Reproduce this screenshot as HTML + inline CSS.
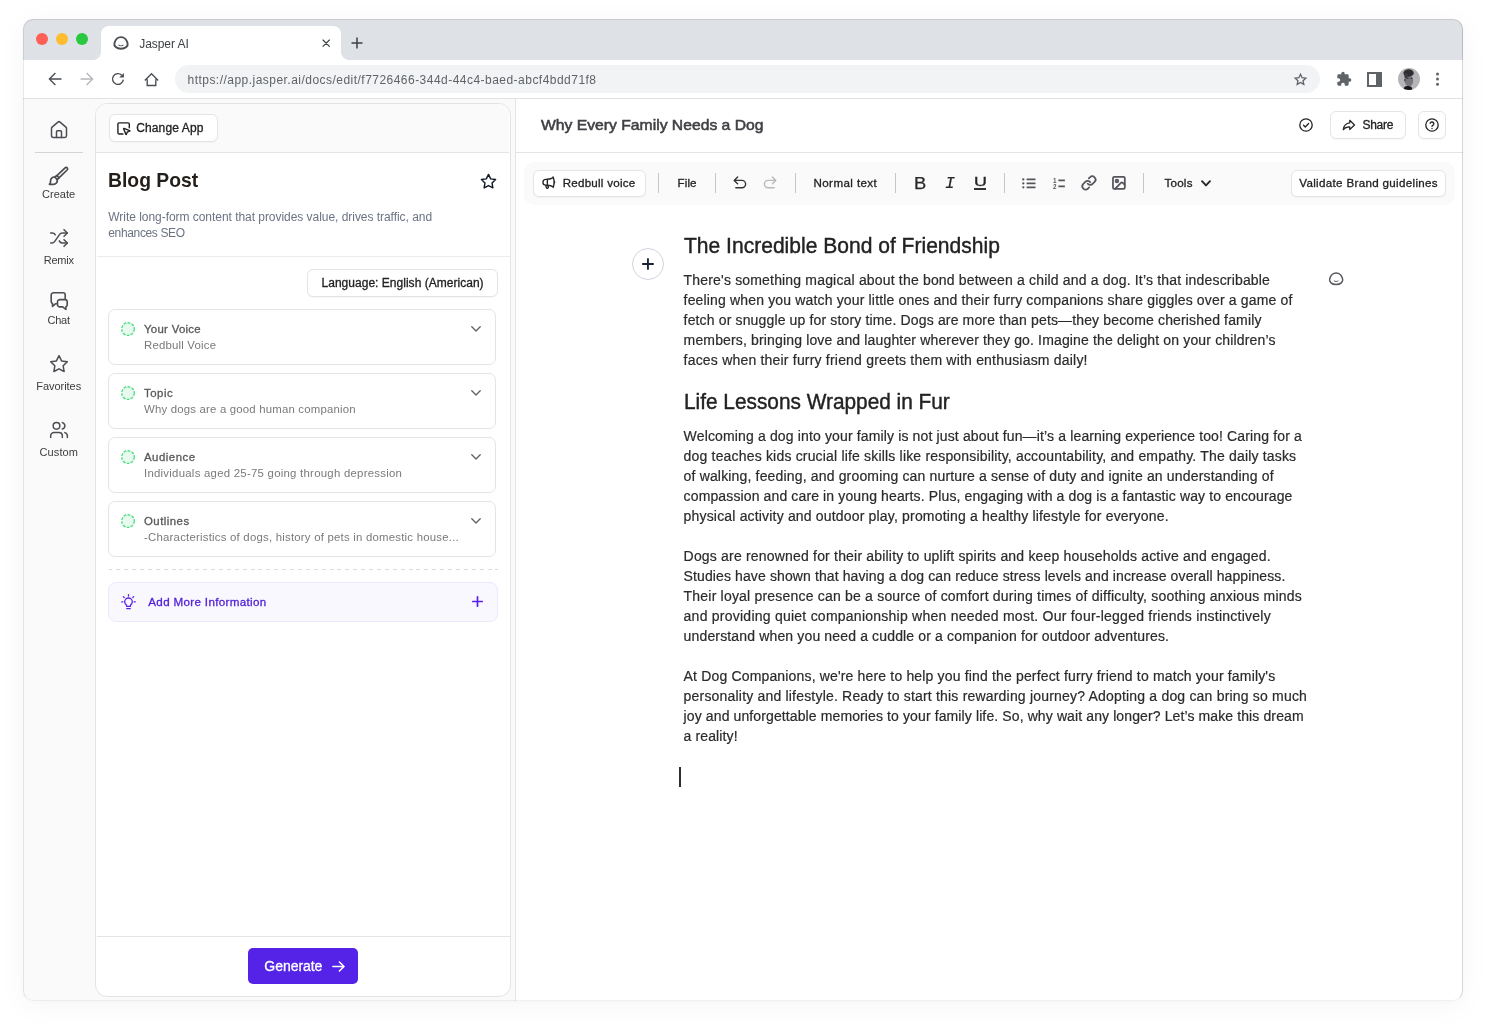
<!DOCTYPE html>
<html lang="en">
<head>
<meta charset="utf-8">
<title>Jasper AI</title>
<style>
*{box-sizing:border-box;margin:0;padding:0}
html,body{width:1486px;height:1028px;overflow:hidden;background:#fff}
body{font-family:"Liberation Sans",sans-serif;color:#222;position:relative}
svg{display:block;overflow:visible;position:absolute}
.a{position:absolute}
.t{position:absolute;white-space:nowrap}
.ic{fill:none;stroke-linecap:round;stroke-linejoin:round}
#win{position:absolute;left:23px;top:19px;width:1440px;height:982px;border-radius:10px;background:#fff;overflow:hidden;
 box-shadow:0 5px 30px rgba(0,0,0,.038),0 1px 5px rgba(0,0,0,.015)}
#ring{position:absolute;left:23px;top:19px;width:1440px;height:982px;border-radius:10px;border:1px solid rgba(0,0,0,.085);border-top-color:rgba(0,0,0,.10);border-right-color:rgba(0,0,0,.16);border-bottom-color:rgba(0,0,0,.055);pointer-events:none}
#o{position:absolute;left:-23px;top:-19px;width:1486px;height:1028px;will-change:transform}
/* chrome */
#tabbar{left:23px;top:19px;width:1440px;height:41px;background:#dee1e6}
.tl{position:absolute;top:33px;width:12px;height:12px;border-radius:50%}
#tab{left:101px;top:26px;width:240px;height:34px;background:#fff;border-radius:8px 8px 0 0}
#tab:before,#tab:after{content:"";position:absolute;bottom:0;width:8px;height:8px}
#tab:before{left:-8px;background:radial-gradient(circle at 0 0,rgba(255,255,255,0) 7.6px,#fff 8.2px)}
#tab:after{right:-8px;background:radial-gradient(circle at 100% 0,rgba(255,255,255,0) 7.6px,#fff 8.2px)}
#ctool{left:23px;top:60px;width:1440px;height:39px;background:#fff;border-bottom:1px solid #e2e2e2}
#url{left:175px;top:65px;width:1145px;height:28px;border-radius:14px;background:#f1f3f4}
/* app */
#appbg{left:23px;top:99px;width:1440px;height:902px;background:#fafafa}
#panel{left:95px;top:103px;width:415.5px;height:894px;background:#fff;border:1px solid #e4e4e7;border-radius:12px;overflow:hidden}
#phead{left:0;top:0;width:413px;height:49px;background:#fafafa;border-bottom:1px solid #e4e4e7}
.hr{position:absolute;height:1px;background:#ececee}
.btn{position:absolute;background:#fff;border:1px solid #e4e4e7;border-radius:6px;box-shadow:0 1px 1px rgba(0,0,0,.03)}
.card{position:absolute;left:108px;width:388px;height:56px;border:1px solid #e2e4ea;border-radius:7px;background:#fff}
.dot{position:absolute;left:121px;width:14px;height:14px}
#editor{left:515px;top:99px;width:948px;height:902px;background:#fff;border-left:1px solid #e4e4e7}
#etool{left:524px;top:161.5px;width:930.5px;height:43px;background:#fafafa;border-radius:10px}
.sep{position:absolute;top:173.200px;width:1px;height:19.400px;background:#c6c6ca}
</style>
</head>
<body>
<div id="win"><div id="o">
<!-- ======= browser chrome ======= -->
<div id="tabbar" class="a"></div>
<div class="tl" style="left:36px;background:#fe5f57"></div>
<div class="tl" style="left:56px;background:#febc2e"></div>
<div class="tl" style="left:76px;background:#28c840"></div>
<div id="tab" class="a"></div>
<div id="ctool" class="a"></div>
<div id="url" class="a"></div>

<!-- tab favicon (jasper face) -->
<svg style="left:113px;top:36px" width="16" height="14" viewBox="0 0 16 14"><path class="ic" stroke="#4a4d51" stroke-width="1.900" d="M8 1.100C4.700 1.100 2.400 3.600 1.400 7.200.700 10 3.500 12.700 8 12.700s7.300-2.700 6.600-5.500C13.600 3.600 11.300 1.100 8 1.100z"/><path class="ic" stroke="#4a4d51" stroke-width="1.100" d="M5.900 9.100c1 .900 3.200.900 4.200 0"/></svg>
<!-- tab close -->
<svg style="left:321.700px;top:38.900px" width="8.400" height="8.400" viewBox="0 0 10 10"><path class="ic" stroke="#3c4043" stroke-width="1.4" d="M1.200 1.200l7.600 7.600M8.800 1.200l-7.600 7.600"/></svg>
<!-- new tab plus -->
<svg style="left:351px;top:37px" width="12" height="12" viewBox="0 0 12 12"><path class="ic" stroke="#3c4043" stroke-width="1.5" style="stroke-linecap:butt" d="M6 .5v11M.5 6h11"/></svg>
<!-- back -->
<svg style="left:48px;top:72px" width="14" height="14" viewBox="0 0 14 14"><path class="ic" stroke="#4a4d51" stroke-width="1.350" style="stroke-linecap:butt;stroke-linejoin:miter" d="M13.500 7H1.800M7.400 1L1.400 7l6 6"/></svg>
<!-- forward -->
<svg style="left:80px;top:72px" width="14" height="14" viewBox="0 0 14 14"><path class="ic" stroke="#b4b7bb" stroke-width="1.350" style="stroke-linecap:butt;stroke-linejoin:miter" d="M.5 7h11.700M6.600 1l6 6-6 6"/></svg>
<!-- reload -->
<svg style="left:111px;top:72px" width="14" height="14" viewBox="0 0 14 14"><path class="ic" stroke="#4a4d51" stroke-width="1.350" style="stroke-linecap:butt" d="M12.300 7.600A5.400 5.400 0 1 1 10.800 3.200"/><path fill="#4a4d51" d="M12.900.9v4.700H8.200z"/></svg>
<!-- home -->
<svg style="left:143.500px;top:71.500px" width="15" height="15" viewBox="0 0 15 15"><path class="ic" stroke="#4a4d51" stroke-width="1.350" style="stroke-linecap:butt;stroke-linejoin:miter" d="M3.200 7.200v6.300h8.600V7.200M.8 8.400L7.500 1.700l6.700 6.700"/></svg>
<!-- bookmark star -->
<svg style="left:1293.500px;top:72.500px" width="13" height="12.500" viewBox="0 0 24 23"><path class="ic" stroke="#5f6368" stroke-width="2.400" style="stroke-linejoin:miter" d="M12 2.400l2.900 6.300 6.900.8-5.100 4.700 1.400 6.800L12 17.500 5.900 21l1.400-6.800L2.200 9.500l6.900-.8z"/></svg>
<!-- puzzle -->
<svg style="left:1335.500px;top:71px" width="16" height="16" viewBox="0 0 24 24"><path fill="#5f6368" d="M20.500 11H19V7c0-1.100-.9-2-2-2h-4V3.500a2.500 2.500 0 0 0-5 0V5H4c-1.100 0-2 .9-2 2v3.800h1.500c1.500 0 2.700 1.200 2.700 2.700S5 16.200 3.500 16.200H2V20c0 1.100.9 2 2 2h3.800v-1.500c0-1.500 1.200-2.700 2.700-2.700s2.700 1.200 2.700 2.700V22H17c1.100 0 2-.9 2-2v-4h1.500a2.500 2.500 0 0 0 0-5z"/></svg>
<!-- side panel -->
<svg style="left:1367px;top:71.500px" width="15" height="15" viewBox="0 0 15 15"><rect x="1" y="1" width="13" height="13" fill="none" stroke="#5f6368" stroke-width="2"/><rect x="9" y="1" width="5" height="13" fill="#5f6368"/></svg>
<!-- avatar -->
<svg style="left:1398px;top:68px" width="22" height="22" viewBox="0 0 22 22"><defs><clipPath id="avc"><circle cx="11" cy="11" r="11"/></clipPath><filter id="avb" x="-20%" y="-20%" width="140%" height="140%"><feGaussianBlur stdDeviation=".550"/></filter></defs>
<g clip-path="url(#avc)"><rect width="22" height="22" fill="#b6b4b6"/><g filter="url(#avb)">
<ellipse cx="10.900" cy="12.700" rx="4.200" ry="5.900" fill="#77777e"/>
<ellipse cx="7" cy="12" rx="1.100" ry="1.600" fill="#5a5a61"/>
<ellipse cx="10.600" cy="5" rx="5.200" ry="3.700" fill="#2f2f36"/>
<ellipse cx="8" cy="7.800" rx="1.800" ry="2.600" fill="#3b3b42"/>
<ellipse cx="9.600" cy="10.400" rx="1.300" ry=".600" fill="#3d3d44"/><ellipse cx="13.500" cy="10.400" rx="1.100" ry=".600" fill="#3d3d44"/>
<ellipse cx="9.900" cy="21.300" rx="4.300" ry="3.400" fill="#15151a"/>
</g></g></svg>
<!-- menu dots -->
<svg style="left:1435px;top:71px" width="5" height="16" viewBox="0 0 5 16"><circle cx="2.500" cy="3" r="1.500" fill="#5f6368"/><circle cx="2.500" cy="8" r="1.500" fill="#5f6368"/><circle cx="2.500" cy="13.200" r="1.500" fill="#5f6368"/></svg>

<!-- ======= app ======= -->
<div id="appbg" class="a"></div>

<!-- nav -->
<svg style="left:49px;top:119.5px" width="20" height="20" viewBox="0 0 24 24"><g class="ic" stroke="#4d4d53" stroke-width="1.8"><path d="M15 21v-7a1 1 0 0 0-1-1h-4a1 1 0 0 0-1 1v7"/><path d="M3 10a2 2 0 0 1 .709-1.528l7-5.999a2 2 0 0 1 2.582 0l7 5.999A2 2 0 0 1 21 10v9a2 2 0 0 1-2 2H5a2 2 0 0 1-2-2z"/></g></svg><div class="a" style="left:35px;top:152px;width:48px;height:1px;background:#d4d4d8"></div><svg style="left:49px;top:165.500px" width="20" height="20" viewBox="0 0 20 20"><g class="ic" stroke="#4b4b50" stroke-width="1.700"><path d="M9.980 11.790 18.120 4A1.500 1.500 0 0 0 16.080 1.800L7.940 9.590"/><path d="M7.940 9.590l2.040 2.200M5.730 10.980l2.520 2.700M7.940 9.590 5.730 10.980M9.980 11.790 8.250 13.680"/><path d="M5.730 10.980C3.200 10.900 1.500 12.600 1.600 14.800c.050 1.600-.400 2.800-1.200 3.500h4c2.400 0 4.300-1.900 3.850-4.620"/></g></svg><svg style="left:49px;top:228px" width="20" height="20" viewBox="0 0 24 24"><g class="ic" stroke="#4d4d53" stroke-width="1.8"><path d="M2 18h1.400c1.300 0 2.500-.600 3.300-1.700l6.100-8.600c.700-1.100 2-1.700 3.300-1.700H22"/><path d="m18 2 4 4-4 4"/><path d="M2 6h1.900c1.500 0 2.900.900 3.600 2.200"/><path d="M22 18h-5.900c-1.300 0-2.600-.700-3.300-1.800l-.500-.800"/><path d="m18 14 4 4-4 4"/></g></svg><svg style="left:49px;top:290.500px" width="20" height="20" viewBox="0 0 20 20"><g class="ic" stroke="#4d4d53" stroke-width="1.600"><path d="M9 12.700H6.700L3.500 15.300V12.500A2.200 2.200 0 0 1 2.200 10.500V4A2.200 2.200 0 0 1 4.400 1.800H14A2.200 2.200 0 0 1 16.200 4V7.800"/><path fill="#fafafa" d="M10.700 8.600H16A2.200 2.200 0 0 1 18.200 10.800V13.700A2.200 2.200 0 0 1 16.900 15.700V18.500L13.700 15.900H10.700A2.200 2.200 0 0 1 8.500 13.700V10.800A2.200 2.200 0 0 1 10.700 8.600z"/></g></svg><svg style="left:49px;top:353.5px" width="20" height="20" viewBox="0 0 24 24"><g class="ic" stroke="#4d4d53" stroke-width="1.8"><polygon points="12 2 15.090 8.260 22 9.270 17 14.140 18.180 21.020 12 17.770 5.820 21.020 7 14.140 2 9.270 8.910 8.260 12 2"/></g></svg><svg style="left:49px;top:420px" width="20" height="20" viewBox="0 0 24 24"><g class="ic" stroke="#4d4d53" stroke-width="1.8"><path d="M16 21v-2a4 4 0 0 0-4-4H6a4 4 0 0 0-4 4v2"/><circle cx="9" cy="7" r="4"/><path d="M22 21v-2a4 4 0 0 0-3-3.870"/><path d="M16 3.130a4 4 0 0 1 0 7.750"/></g></svg>
<div id="panel" class="a"><div id="phead" class="a"></div></div>

<!-- panel widgets -->
<div class="btn" style="left:108.500px;top:114px;width:109px;height:28px"></div><svg style="left:115.900px;top:121.400px" width="15.200" height="14.800" viewBox="0 0 24 24" preserveAspectRatio="none"><g class="ic" stroke="#222" stroke-width="2.2"><path d="M12.034 12.681a.498.498 0 0 1 .647-.647l9 3.500a.5.500 0 0 1-.033.943l-3.444 1.068a1 1 0 0 0-.660.660l-1.067 3.443a.5.500 0 0 1-.943.033z"/><path d="M21 11V5a2 2 0 0 0-2-2H5a2 2 0 0 0-2 2v14a2 2 0 0 0 2 2h6"/></g></svg><svg style="left:479.5px;top:172.5px" width="17" height="17" viewBox="0 0 24 24"><g class="ic" stroke="#111827" stroke-width="2.0"><polygon points="12 2 15.090 8.260 22 9.270 17 14.140 18.180 21.020 12 17.770 5.820 21.020 7 14.140 2 9.270 8.910 8.260 12 2"/></g></svg><div class="hr" style="left:96.500px;top:256px;width:413px"></div><div class="btn" style="left:307px;top:269px;width:190.500px;height:27.500px"></div><div class="card" style="top:309px"></div><svg style="left:121px;top:322px" width="14" height="14" viewBox="0 0 14 14"><circle cx="7" cy="7" r="6.300" fill="#e9f9ef" stroke="#4ade80" stroke-width="1.350" stroke-dasharray="2.850 1.220"/></svg><svg style="left:471px;top:326.2px" width="10" height="6" viewBox="0 0 10 6"><path class="ic" stroke="#62626b" stroke-width="1.350" d="M.8.800 5 5l4.200-4.200"/></svg><div class="card" style="top:373px"></div><svg style="left:121px;top:386px" width="14" height="14" viewBox="0 0 14 14"><circle cx="7" cy="7" r="6.300" fill="#e9f9ef" stroke="#4ade80" stroke-width="1.350" stroke-dasharray="2.850 1.220"/></svg><svg style="left:471px;top:390.2px" width="10" height="6" viewBox="0 0 10 6"><path class="ic" stroke="#62626b" stroke-width="1.350" d="M.8.800 5 5l4.200-4.200"/></svg><div class="card" style="top:437px"></div><svg style="left:121px;top:450px" width="14" height="14" viewBox="0 0 14 14"><circle cx="7" cy="7" r="6.300" fill="#e9f9ef" stroke="#4ade80" stroke-width="1.350" stroke-dasharray="2.850 1.220"/></svg><svg style="left:471px;top:454.2px" width="10" height="6" viewBox="0 0 10 6"><path class="ic" stroke="#62626b" stroke-width="1.350" d="M.8.800 5 5l4.200-4.200"/></svg><div class="card" style="top:501px"></div><svg style="left:121px;top:514px" width="14" height="14" viewBox="0 0 14 14"><circle cx="7" cy="7" r="6.300" fill="#e9f9ef" stroke="#4ade80" stroke-width="1.350" stroke-dasharray="2.850 1.220"/></svg><svg style="left:471px;top:518.2px" width="10" height="6" viewBox="0 0 10 6"><path class="ic" stroke="#62626b" stroke-width="1.350" d="M.8.800 5 5l4.200-4.200"/></svg><div class="a" style="left:108.500px;top:569px;width:389.500px;height:1px;background:repeating-linear-gradient(90deg,#d9d9de 0 3.400px,transparent 3.400px 7.300px,#d9d9de 7.300px 7.900px)"></div><div class="a" style="left:108.100px;top:582px;width:389.900px;height:39.500px;border:1px solid #ece9fd;border-radius:8px;background:#f9f8ff"></div><svg style="left:120.500px;top:593.500px" width="15" height="16.500" viewBox="0 0 15 16.500"><g class="ic" stroke="#5b21e6" stroke-width="1.300"><path d="M5.500 12.300V11c-1.100-.700-1.800-1.900-1.800-3.200a3.800 3.800 0 0 1 7.600 0c0 1.300-.700 2.500-1.800 3.200v1.300z"/><path d="M5.700 14.600h3.600"/><path d="M7.500.700v1.300"/><path d="M2.300 2.600l.900.900"/><path d="M12.700 2.600l-.900.900"/><path d="M.7 7.800h1.200"/><path d="M13.100 7.800h1.200"/></g></svg><svg style="left:472.100px;top:596.100px" width="11" height="11" viewBox="0 0 11 11"><path class="ic" stroke="#5b21e6" stroke-width="1.700" d="M5.500.800v9.400M.8 5.500h9.400"/></svg><div class="hr" style="left:96.500px;top:936px;width:413px;background:#e4e4e7"></div><div class="a" style="left:248px;top:948px;width:110px;height:36px;border-radius:5px;background:#5423e7"></div><svg style="left:332px;top:960.500px" width="13" height="11" viewBox="0 0 13 11"><path class="ic" stroke="#fff" stroke-width="1.600" d="M.9 5.500h11M7.400 1l4.600 4.500L7.400 10"/></svg>
<div id="editor" class="a"></div>

<!-- editor widgets -->
<div class="hr" style="left:516px;top:152px;width:947px;background:#e4e4e7"></div><svg style="left:1298px;top:117px" width="16" height="16" viewBox="0 0 24 24"><g class="ic" stroke="#27272a" stroke-width="2.0"><circle cx="12" cy="12" r="9.300"/><path d="m8.300 12.300 2.600 2.600 5-5.200"/></g></svg><div class="btn" style="left:1330px;top:111px;width:75.500px;height:28px"></div><svg style="left:1342px;top:119px" width="13.5" height="12" viewBox="0 0 27 24"><path class="ic" stroke="#27272a" stroke-width="2.500" d="M15.500 2.500 25 12l-9.500 9v-5.200c-5.500-.300-9.800 1.400-13 5.700 1-7.600 5.300-12.700 13-13.600z"/></svg><div class="btn" style="left:1418px;top:111px;width:27.500px;height:28px"></div><svg style="left:1424px;top:117px" width="16" height="16" viewBox="0 0 24 24"><g class="ic" stroke="#27272a" stroke-width="2.0"><circle cx="12" cy="12" r="9.300"/><path d="M9.200 9.300a2.900 2.900 0 0 1 5.600 1c0 1.900-2.800 2.500-2.800 3.700"/><path d="M12 17.200h.010"/></g></svg><div id="etool" class="a"></div><div class="btn" style="left:532.500px;top:169.500px;width:113px;height:27px"></div><svg style="left:541.300px;top:175.200px" width="15.500" height="15.500" viewBox="0 0 24 24"><g class="ic" stroke="#27272a" stroke-width="2.150"><path d="M10.340 15.840c-.688-.060-1.386-.090-2.090-.090H7.500a4.500 4.500 0 1 1 0-9h.750c.704 0 1.402-.030 2.090-.090m0 9.180c.253.962.584 1.892.985 2.783.247.550.060 1.210-.463 1.511l-.657.380c-.551.318-1.260.117-1.527-.461a20.845 20.845 0 0 1-1.440-4.282m3.102.069a18.030 18.030 0 0 1-.590-4.590c0-1.586.205-3.124.590-4.590m0 9.180a23.848 23.848 0 0 1 8.835 2.535M10.340 6.660a23.847 23.847 0 0 0 8.835-2.535m0 0A23.740 23.740 0 0 0 18.795 3m.380 1.125a23.910 23.910 0 0 1 1.014 5.395m-1.014 8.855c-.118.380-.245.754-.380 1.125m.380-1.125a23.910 23.910 0 0 0 1.014-5.395m0-3.460c.495.413.811 1.035.811 1.730 0 .695-.316 1.317-.811 1.730m0-3.460a24.347 24.347 0 0 1 0 3.460"/></g></svg><div class="sep" style="left:658px"></div><div class="sep" style="left:715px"></div><div class="sep" style="left:794.5px"></div><div class="sep" style="left:895px"></div><div class="sep" style="left:1004px"></div><div class="sep" style="left:1143px"></div><svg style="left:733px;top:176px" width="14" height="13" viewBox="0 0 14 13"><path class="ic" stroke="#333" stroke-width="1.400" d="M4.600 1 1.200 4.400l3.400 3.400M1.500 4.400h7.400a3.700 3.700 0 0 1 0 7.400H2.800"/></svg><svg style="left:763px;top:176px" width="14" height="13" viewBox="0 0 14 13"><path class="ic" stroke="#b9b9bd" stroke-width="1.400" d="M9.400 1l3.400 3.400-3.400 3.400M12.500 4.400H5.100a3.700 3.700 0 0 0 0 7.400h6.100"/></svg><div class="t" style="left:913.800px;top:173.500px;font-size:17px;line-height:19px;color:#27272a;-webkit-text-stroke:.25px #27272a;transform:scaleX(1.080);transform-origin:0 0">B</div><div class="t" style="left:944.900px;top:174.100px;font-family:'Liberation Mono',monospace;font-style:italic;font-size:16.800px;line-height:20px;color:#27272a;-webkit-text-stroke:.2px #27272a">I</div><div class="t" style="left:973.600px;top:174.100px;font-size:12.800px;line-height:16px;color:#27272a;-webkit-text-stroke:.3px #27272a;transform:scaleX(1.400);transform-origin:0 0">U</div><div class="a" style="left:974px;top:188.250px;width:12.100px;height:1.500px;background:#333"></div><svg style="left:1022px;top:177.500px" width="15" height="11" viewBox="0 0 15 11"><g fill="#55555b"><circle cx="1.300" cy="1.400" r="1.150"/><circle cx="1.300" cy="5.400" r="1.150"/><circle cx="1.300" cy="9.300" r="1.150"/></g><path class="ic" stroke="#55555b" stroke-width="1.850" style="stroke-linecap:butt" d="M4.600 1.400h8.900M4.600 5.400h8.900M4.600 9.300h8.900"/></svg><svg style="left:1052.500px;top:177.500px" width="13" height="12" viewBox="0 0 13 12"><path class="ic" stroke="#55555b" stroke-width="1.850" style="stroke-linecap:butt" d="M5.400 2.300h6.500M5.400 8.400h6.500"/><text x="0" y="4.700" font-family="Liberation Sans,sans-serif" font-size="6.300" font-weight="700" fill="#55555b">1</text><text x="0" y="10.900" font-family="Liberation Sans,sans-serif" font-size="6.300" font-weight="700" fill="#55555b">2</text></svg><svg style="left:1081.200px;top:175px" width="15.900" height="15.900" viewBox="0 0 24 24"><g class="ic" stroke="#55555b" stroke-width="2.600"><path d="M10 13a5 5 0 0 0 7.540.540l3-3a5 5 0 0 0-7.070-7.070l-1.720 1.710"/><path d="M14 11a5 5 0 0 0-7.540-.540l-3 3a5 5 0 0 0 7.070 7.070l1.710-1.710"/></g></svg><svg style="left:1111.150px;top:174.950px" width="15.800" height="15.800" viewBox="0 0 24 24"><g class="ic" stroke="#55555b" stroke-width="2.700"><rect width="18" height="18" x="3" y="3" rx="2" ry="2"/><circle cx="9" cy="9" r="2"/><path d="m21 15-3.086-3.086a2 2 0 0 0-2.828 0L6 21"/></g></svg><svg style="left:1201px;top:180px" width="10" height="7" viewBox="0 0 10 7"><path class="ic" stroke="#27272a" stroke-width="1.900" d="M1 1.200l4 4.200 4-4.200"/></svg><div class="btn" style="left:1291px;top:169.500px;width:154.500px;height:27px"></div><div class="a" style="left:632px;top:247.900px;width:32px;height:32px;border-radius:50%;border:1px solid #d0d4de;background:#fff"></div><svg style="left:642px;top:258px" width="12" height="12" viewBox="0 0 12 12"><path class="ic" stroke="#1a2233" stroke-width="1.850" style="stroke-linecap:butt" d="M5.950.150v11.600M.150 5.950h11.600"/></svg><svg style="left:1328px;top:272px" width="16.300" height="13.800" viewBox="0 0 16 14"><path class="ic" stroke="#55555a" stroke-width="1.500" d="M8 1.100C4.700 1.100 2.400 3.600 1.400 7.200.700 10 3.500 12.700 8 12.700s7.300-2.700 6.600-5.500C13.600 3.600 11.300 1.100 8 1.100z"/><path class="ic" stroke="#55555a" stroke-width="1" d="M6 9.100c1 .800 3 .800 4 0"/></svg><div class="a" style="left:679px;top:767px;width:2px;height:20px;background:#2e2e2e"></div>
<!-- ======= text ======= -->
<div class="t" style="left:683.60px;top:273.00px;font-size:14px;line-height:14px;letter-spacing:0.175px;color:#2b2b2b;-webkit-text-stroke:0.2px #2b2b2b;">There's something magical about the bond between a child and a dog. It’s that indescribable</div>
<div class="t" style="left:683.60px;top:293.00px;font-size:14px;line-height:14px;letter-spacing:0.159px;color:#2b2b2b;-webkit-text-stroke:0.2px #2b2b2b;">feeling when you watch your little ones and their furry companions share giggles over a game of</div>
<div class="t" style="left:683.60px;top:313.00px;font-size:14px;line-height:14px;letter-spacing:0.148px;color:#2b2b2b;-webkit-text-stroke:0.2px #2b2b2b;">fetch or snuggle up for story time. Dogs are more than pets—they become cherished family</div>
<div class="t" style="left:683.60px;top:333.00px;font-size:14px;line-height:14px;letter-spacing:0.152px;color:#2b2b2b;-webkit-text-stroke:0.2px #2b2b2b;">members, bringing love and laughter wherever they go. Imagine the delight on your children’s</div>
<div class="t" style="left:683.60px;top:353.00px;font-size:14px;line-height:14px;letter-spacing:0.198px;color:#2b2b2b;-webkit-text-stroke:0.2px #2b2b2b;">faces when their furry friend greets them with enthusiasm daily!</div>
<div class="t" style="left:683.60px;top:429.00px;font-size:14px;line-height:14px;letter-spacing:0.144px;color:#2b2b2b;-webkit-text-stroke:0.2px #2b2b2b;">Welcoming a dog into your family is not just about fun—it’s a learning experience too! Caring for a</div>
<div class="t" style="left:683.60px;top:449.00px;font-size:14px;line-height:14px;letter-spacing:0.181px;color:#2b2b2b;-webkit-text-stroke:0.2px #2b2b2b;">dog teaches kids crucial life skills like responsibility, accountability, and empathy. The daily tasks</div>
<div class="t" style="left:683.60px;top:469.00px;font-size:14px;line-height:14px;letter-spacing:0.163px;color:#2b2b2b;-webkit-text-stroke:0.2px #2b2b2b;">of walking, feeding, and grooming can nurture a sense of duty and ignite an understanding of</div>
<div class="t" style="left:683.60px;top:489.00px;font-size:14px;line-height:14px;letter-spacing:0.127px;color:#2b2b2b;-webkit-text-stroke:0.2px #2b2b2b;">compassion and care in young hearts. Plus, engaging with a dog is a fantastic way to encourage</div>
<div class="t" style="left:683.60px;top:509.00px;font-size:14px;line-height:14px;letter-spacing:0.175px;color:#2b2b2b;-webkit-text-stroke:0.2px #2b2b2b;">physical activity and outdoor play, promoting a healthy lifestyle for everyone.</div>
<div class="t" style="left:683.60px;top:549.00px;font-size:14px;line-height:14px;letter-spacing:0.189px;color:#2b2b2b;-webkit-text-stroke:0.2px #2b2b2b;">Dogs are renowned for their ability to uplift spirits and keep households active and engaged.</div>
<div class="t" style="left:683.60px;top:569.00px;font-size:14px;line-height:14px;letter-spacing:0.112px;color:#2b2b2b;-webkit-text-stroke:0.2px #2b2b2b;">Studies have shown that having a dog can reduce stress levels and increase overall happiness.</div>
<div class="t" style="left:683.60px;top:589.00px;font-size:14px;line-height:14px;letter-spacing:0.201px;color:#2b2b2b;-webkit-text-stroke:0.2px #2b2b2b;">Their loyal presence can be a source of comfort during times of difficulty, soothing anxious minds</div>
<div class="t" style="left:683.60px;top:609.00px;font-size:14px;line-height:14px;letter-spacing:0.242px;color:#2b2b2b;-webkit-text-stroke:0.2px #2b2b2b;">and providing quiet companionship when needed most. Our four-legged friends instinctively</div>
<div class="t" style="left:683.60px;top:629.00px;font-size:14px;line-height:14px;letter-spacing:0.150px;color:#2b2b2b;-webkit-text-stroke:0.2px #2b2b2b;">understand when you need a cuddle or a companion for outdoor adventures.</div>
<div class="t" style="left:683.60px;top:669.00px;font-size:14px;line-height:14px;letter-spacing:0.162px;color:#2b2b2b;-webkit-text-stroke:0.2px #2b2b2b;">At Dog Companions, we're here to help you find the perfect furry friend to match your family's</div>
<div class="t" style="left:683.60px;top:689.00px;font-size:14px;line-height:14px;letter-spacing:0.192px;color:#2b2b2b;-webkit-text-stroke:0.2px #2b2b2b;">personality and lifestyle. Ready to start this rewarding journey? Adopting a dog can bring so much</div>
<div class="t" style="left:683.60px;top:709.00px;font-size:14px;line-height:14px;letter-spacing:0.113px;color:#2b2b2b;-webkit-text-stroke:0.2px #2b2b2b;">joy and unforgettable memories to your family life. So, why wait any longer? Let’s make this dream</div>
<div class="t" style="left:683.60px;top:729.00px;font-size:14px;line-height:14px;letter-spacing:0.120px;color:#2b2b2b;-webkit-text-stroke:0.2px #2b2b2b;">a reality!</div>
<div class="t" style="left:683.60px;top:236.00px;font-size:21.5px;line-height:21.5px;letter-spacing:0.000px;color:#222;-webkit-text-stroke:0.4px #222;transform:scaleX(0.9789);transform-origin:0 0;">The Incredible Bond of Friendship</div>
<div class="t" style="left:683.60px;top:392.00px;font-size:21.5px;line-height:21.5px;letter-spacing:0.000px;color:#222;-webkit-text-stroke:0.4px #222;transform:scaleX(0.9684);transform-origin:0 0;">Life Lessons Wrapped in Fur</div>
<div class="t" style="left:540.50px;top:117.00px;font-size:15px;line-height:15px;letter-spacing:0.000px;color:#404046;-webkit-text-stroke:0.55px #404046;transform:scaleX(1.0467);transform-origin:0 0;">Why Every Family Needs a Dog</div>
<div class="t" style="left:562.70px;top:177.00px;font-size:11.6px;line-height:11.6px;letter-spacing:0.241px;color:#222;-webkit-text-stroke:0.3px #222;">Redbull voice</div>
<div class="t" style="left:677.60px;top:177.00px;font-size:11.6px;line-height:11.6px;letter-spacing:0.071px;color:#222;-webkit-text-stroke:0.3px #222;">File</div>
<div class="t" style="left:813.50px;top:177.00px;font-size:11.6px;line-height:11.6px;letter-spacing:0.402px;color:#222;-webkit-text-stroke:0.3px #222;">Normal text</div>
<div class="t" style="left:1164.40px;top:177.00px;font-size:11.6px;line-height:11.6px;letter-spacing:0.255px;color:#222;-webkit-text-stroke:0.3px #222;">Tools</div>
<div class="t" style="left:1299.20px;top:177.00px;font-size:11.6px;line-height:11.6px;letter-spacing:0.327px;color:#222;-webkit-text-stroke:0.3px #222;">Validate Brand guidelines</div>
<div class="t" style="left:1362.40px;top:119.00px;font-size:12px;line-height:12px;letter-spacing:-0.233px;color:#222;-webkit-text-stroke:0.3px #222;">Share</div>
<div class="t" style="left:136.20px;top:122.00px;font-size:12px;line-height:12px;letter-spacing:0.126px;color:#222;-webkit-text-stroke:0.3px #222;">Change App</div>
<div class="t" style="left:108.00px;top:169.00px;font-size:21px;line-height:21px;letter-spacing:0.000px;color:#241f1b;font-weight:700;transform:scaleX(0.9204);transform-origin:0 0;">Blog Post</div>
<div class="t" style="left:108.30px;top:211.00px;font-size:12px;line-height:12px;letter-spacing:-0.041px;color:#6b7383;">Write long-form content that provides value, drives traffic, and</div>
<div class="t" style="left:108.30px;top:227.00px;font-size:12px;line-height:12px;letter-spacing:-0.356px;color:#6b7383;">enhances SEO</div>
<div class="t" style="left:321.50px;top:277.00px;font-size:12px;line-height:12px;letter-spacing:0.025px;color:#222;-webkit-text-stroke:0.3px #222;">Language: English (American)</div>
<div class="t" style="left:144.00px;top:324.00px;font-size:11.4px;line-height:11.4px;letter-spacing:0.295px;color:#585858;-webkit-text-stroke:0.3px #585858;">Your Voice</div>
<div class="t" style="left:144.00px;top:340.00px;font-size:11.4px;line-height:11.4px;letter-spacing:0.195px;color:#7a7a7a;">Redbull Voice</div>
<div class="t" style="left:144.00px;top:388.00px;font-size:11.4px;line-height:11.4px;letter-spacing:0.527px;color:#585858;-webkit-text-stroke:0.3px #585858;">Topic</div>
<div class="t" style="left:144.00px;top:404.00px;font-size:11.4px;line-height:11.4px;letter-spacing:0.189px;color:#7a7a7a;">Why dogs are a good human companion</div>
<div class="t" style="left:144.00px;top:452.00px;font-size:11.4px;line-height:11.4px;letter-spacing:0.514px;color:#585858;-webkit-text-stroke:0.3px #585858;">Audience</div>
<div class="t" style="left:144.00px;top:468.00px;font-size:11.4px;line-height:11.4px;letter-spacing:0.251px;color:#7a7a7a;">Individuals aged 25-75 going through depression</div>
<div class="t" style="left:144.00px;top:516.00px;font-size:11.4px;line-height:11.4px;letter-spacing:0.472px;color:#585858;-webkit-text-stroke:0.3px #585858;">Outlines</div>
<div class="t" style="left:144.00px;top:532.00px;font-size:11.4px;line-height:11.4px;letter-spacing:0.219px;color:#7a7a7a;">-Characteristics of dogs, history of pets in domestic house...</div>
<div class="t" style="left:148.30px;top:596.00px;font-size:11.6px;line-height:11.6px;letter-spacing:0.338px;color:#4f1dd6;-webkit-text-stroke:0.3px #4f1dd6;">Add More Information</div>
<div class="t" style="left:264.30px;top:959.00px;font-size:14px;line-height:14px;letter-spacing:-0.039px;color:#fff;-webkit-text-stroke:0.3px #fff;">Generate</div>
<div class="t" style="left:42.00px;top:189.00px;font-size:11px;line-height:11px;letter-spacing:0.034px;color:#3c3c3c;">Create</div>
<div class="t" style="left:43.80px;top:255.00px;font-size:11px;line-height:11px;letter-spacing:-0.243px;color:#3c3c3c;">Remix</div>
<div class="t" style="left:47.40px;top:315.00px;font-size:11px;line-height:11px;letter-spacing:-0.183px;color:#3c3c3c;">Chat</div>
<div class="t" style="left:36.30px;top:381.00px;font-size:11px;line-height:11px;letter-spacing:-0.044px;color:#3c3c3c;">Favorites</div>
<div class="t" style="left:39.60px;top:447.00px;font-size:11px;line-height:11px;letter-spacing:0.079px;color:#3c3c3c;">Custom</div>
<div class="t" style="left:139.20px;top:38.00px;font-size:12px;line-height:12px;letter-spacing:-0.041px;color:#3c4043;">Jasper AI</div>
<div class="t" style="left:187.50px;top:74.00px;font-size:12px;line-height:12px;letter-spacing:0.471px;color:#5f6368;">https://app.jasper.ai/docs/edit/f7726466-344d-44c4-baed-abcf4bdd71f8</div>
</div></div>
<div id="ring"></div>
</body>
</html>
